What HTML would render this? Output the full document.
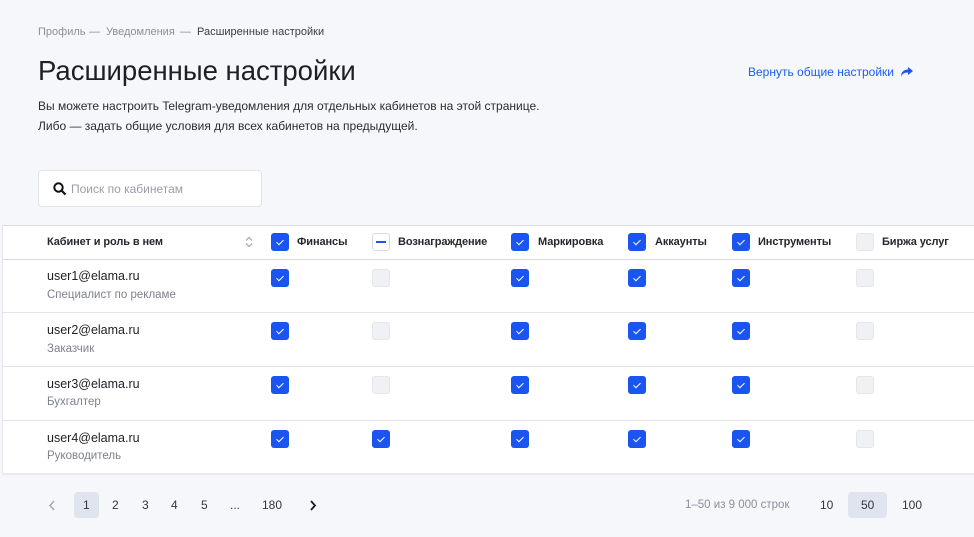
<!DOCTYPE html>
<html><head><meta charset="utf-8"><style>
*{box-sizing:border-box;margin:0;padding:0}
body{width:974px;height:537px;background:#f6f7fb;font-family:"Liberation Sans",sans-serif;color:#1d1f24;position:relative;overflow:hidden}
.a{position:absolute;white-space:nowrap}
.bc{top:26px;font-size:11px;color:#8b8f9a}
h1{position:absolute;left:38px;top:55px;font-size:27.5px;font-weight:400;color:#1d1f24}
.p{left:38px;font-size:12px;color:#2a2c31}
.link{left:748px;top:65px;font-size:12px;color:#1a5cf5}
.search{position:absolute;left:38px;top:170px;width:224px;height:37px;background:#fff;border:1px solid #e2e4ea;border-radius:4px}
.search span{position:absolute;left:32px;top:11px;font-size:12px;color:#9a9ea8}
.table{position:absolute;left:2px;top:225px;width:972px;height:249px;background:#fff;border-top:1px solid #d9dce3;border-left:1px solid #e4e6ec}
.line{position:absolute;left:2px;width:972px;height:1px;background:#e1e3e9}
.cb{position:absolute;width:18px;height:18px;border-radius:3px;background:#1a55f2}
.cb.on::after{content:"";position:absolute;left:7px;top:4.5px;width:3px;height:6px;border:solid #fff;border-width:0 1.8px 1.8px 0;transform:rotate(45deg)}
.cb.off{background:#f0f1f4;border:1px solid #e4e6ea}
.cb.ind{background:#fff;border:1px solid #d8dbe2}
.cb.ind::after{content:"";position:absolute;left:3px;top:7px;width:10px;height:2px;background:#1a55f2}
.h{top:236px;font-size:11px;font-weight:bold;color:#26282d;letter-spacing:-0.1px}
.u{left:47px;font-size:12.5px;color:#1d1f24}
.r{left:47px;font-size:11.5px;color:#7e828d}
.pg{top:498px;font-size:12px;color:#33363c}
.sel{position:absolute;background:#dfe4ee;border-radius:4px}
</style></head><body>
<div class="a bc" style="left:38px">Профиль</div>
<div class="a bc" style="left:89px">—</div>
<div class="a bc" style="left:106px">Уведомления</div>
<div class="a bc" style="left:180px">—</div>
<div class="a bc" style="left:197px;color:#3a3d44">Расширенные настройки</div>
<h1>Расширенные настройки</h1>
<div class="a link">Вернуть общие настройки</div>
<svg class="a" style="left:900px;top:66px" width="14" height="12" viewBox="0 0 14 12"><path d="M8 1 L13 5 L8 9 V6.5 C4 6.5 2 8 1 11 C1 6 4 3.5 8 3.5 Z" fill="#1a55f2"/></svg>
<div class="a p" style="top:99px">Вы можете настроить Telegram-уведомления для отдельных кабинетов на этой странице.</div>
<div class="a p" style="top:119px">Либо — задать общие условия для всех кабинетов на предыдущей.</div>
<div class="search"><svg style="position:absolute;left:14px;top:11px" width="14" height="14" viewBox="0 0 14 14"><circle cx="5.5" cy="5.5" r="4.2" fill="none" stroke="#111" stroke-width="2"/><path d="M8.5 8.5 L12.5 12.5" stroke="#111" stroke-width="2.2"/></svg><span>Поиск по кабинетам</span></div>
<div class="table"></div>
<div class="line" style="top:259px;background:#d9dce3"></div>
<div class="line" style="top:312px"></div>
<div class="line" style="top:366px"></div>
<div class="line" style="top:420px"></div>
<div class="line" style="top:473px;height:2px;background:#e8eaef"></div>
<div class="a h" style="left:47px">Кабинет и роль в нем</div>
<svg class="a" style="left:245px;top:236px" width="8" height="12" viewBox="0 0 8 12"><path d="M1 4.5 L4 1.5 L7 4.5 M1 7.5 L4 10.5 L7 7.5" fill="none" stroke="#a8acb5" stroke-width="1.3"/></svg>
<div class="cb on" style="left:271px;top:233px"></div><div class="a h" style="left:297px">Финансы</div>
<div class="cb ind" style="left:372px;top:233px"></div><div class="a h" style="left:398px">Вознаграждение</div>
<div class="cb on" style="left:511px;top:233px"></div><div class="a h" style="left:538px">Маркировка</div>
<div class="cb on" style="left:628px;top:233px"></div><div class="a h" style="left:655px">Аккаунты</div>
<div class="cb on" style="left:732px;top:233px"></div><div class="a h" style="left:758px">Инструменты</div>
<div class="cb off" style="left:856px;top:233px"></div><div class="a h" style="left:882px">Биржа услуг</div>

<div class="a u" style="top:269px">user1@elama.ru</div><div class="a r" style="top:289px">Специалист по рекламе</div>
<div class="cb on" style="left:271px;top:269px"></div><div class="cb off" style="left:372px;top:269px"></div><div class="cb on" style="left:511px;top:269px"></div><div class="cb on" style="left:628px;top:269px"></div><div class="cb on" style="left:732px;top:269px"></div><div class="cb off" style="left:856px;top:269px"></div>

<div class="a u" style="top:323px">user2@elama.ru</div><div class="a r" style="top:343px">Заказчик</div>
<div class="cb on" style="left:271px;top:322px"></div><div class="cb off" style="left:372px;top:322px"></div><div class="cb on" style="left:511px;top:322px"></div><div class="cb on" style="left:628px;top:322px"></div><div class="cb on" style="left:732px;top:322px"></div><div class="cb off" style="left:856px;top:322px"></div>

<div class="a u" style="top:377px">user3@elama.ru</div><div class="a r" style="top:396px">Бухгалтер</div>
<div class="cb on" style="left:271px;top:376px"></div><div class="cb off" style="left:372px;top:376px"></div><div class="cb on" style="left:511px;top:376px"></div><div class="cb on" style="left:628px;top:376px"></div><div class="cb on" style="left:732px;top:376px"></div><div class="cb off" style="left:856px;top:376px"></div>

<div class="a u" style="top:431px">user4@elama.ru</div><div class="a r" style="top:450px">Руководитель</div>
<div class="cb on" style="left:271px;top:430px"></div><div class="cb on" style="left:372px;top:430px"></div><div class="cb on" style="left:511px;top:430px"></div><div class="cb on" style="left:628px;top:430px"></div><div class="cb on" style="left:732px;top:430px"></div><div class="cb off" style="left:856px;top:430px"></div>

<svg class="a" style="left:48px;top:500px" width="8" height="11" viewBox="0 0 8 11"><path d="M6 1 L2 5.5 L6 10" fill="none" stroke="#9ea2ab" stroke-width="1.4"/></svg>
<div class="sel" style="left:74px;top:492px;width:25px;height:26px"></div>
<div class="a pg" style="left:83px">1</div>
<div class="a pg" style="left:112px">2</div>
<div class="a pg" style="left:142px">3</div>
<div class="a pg" style="left:171px">4</div>
<div class="a pg" style="left:201px">5</div>
<div class="a pg" style="left:230px">...</div>
<div class="a pg" style="left:262px">180</div>
<svg class="a" style="left:309px;top:500px" width="8" height="11" viewBox="0 0 8 11"><path d="M2 1 L6 5.5 L2 10" fill="none" stroke="#1d1f24" stroke-width="1.8"/></svg>
<div class="a pg" style="left:685px;top:499px;color:#8b8f9a;font-size:11.5px">1–50 из 9 000 строк</div>
<div class="a pg" style="left:820px">10</div>
<div class="sel" style="left:848px;top:492px;width:39px;height:26px"></div>
<div class="a pg" style="left:861px">50</div>
<div class="a pg" style="left:902px">100</div>
</body></html>
